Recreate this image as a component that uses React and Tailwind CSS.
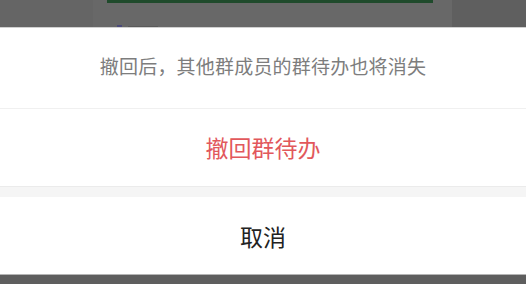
export default function App() {
  const font = { fontFamily: '"Noto Sans CJK SC", "Noto Sans", sans-serif' };
  return (
    <div className="w-[526px] h-[284px] flex flex-col overflow-hidden bg-[#5f5f5f]" style={font}>
      {/* backdrop */}
      <div className="h-[27px] flex shrink-0">
        <div className="w-[93px] bg-[#656565]" />
        <div className="w-[359px] bg-[#686868] px-[14px] flex flex-col">
          <div className="h-[3px] bg-[#1f4a2b] mr-[5px]" />
          <div className="flex-1 flex items-end gap-[6px] pl-[10px]">
            <div className="w-[5px] h-[2px] bg-[#4b4a7a] mb-[0px]" />
            <div className="w-[30px] h-[1px] bg-[#5a5a5a]" />
          </div>
        </div>
        <div className="flex-1 bg-[#5f5f5f]" />
      </div>
      {/* sheet */}
      <div className="h-[1px] bg-[#d0d0d0] shrink-0" />
      <div className="bg-white flex flex-col shrink-0">
        <div className="h-[80px] flex items-center justify-center pb-[4px] text-[19px] text-[#7d7d7d] tracking-[0.2px]">
          撤回后，其他群成员的群待办也将消失
        </div>
        <div className="h-[1px] bg-[#f0f0f0]" />
        <div className="h-[77px] flex items-center justify-center text-[23px] text-[#e2585c]">
          撤回群待办
        </div>
        <div className="h-[1px] bg-[#ebebeb]" />
        <div className="h-[10px] bg-[#f5f5f5]" />
        <div className="h-[77px] flex items-center justify-center pt-[2px] text-[23px] text-[#222222]">
          取消
        </div>
      </div>
      <div className="h-[1px] bg-[#b5b5b5] shrink-0" />
      <div className="flex-1 bg-[#5e5e5e]" />
    </div>
  );
}
